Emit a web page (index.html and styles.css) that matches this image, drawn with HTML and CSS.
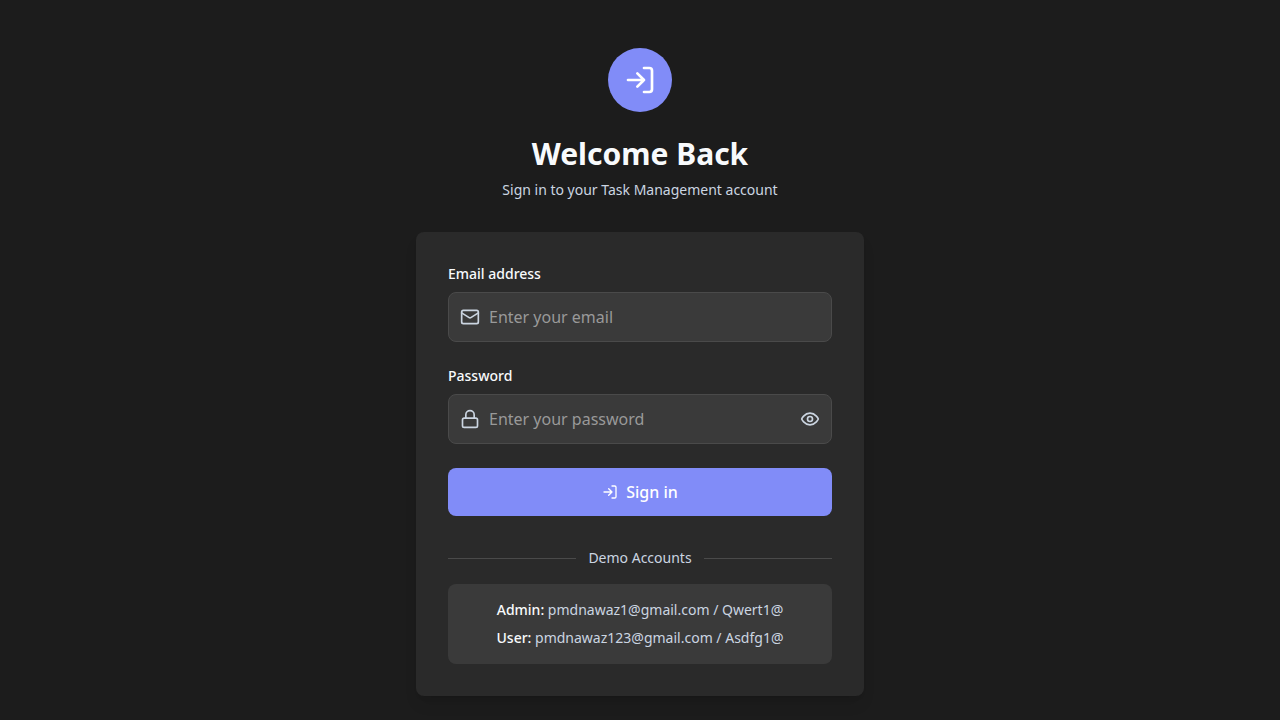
FILE: index.html
```html
<!DOCTYPE html>
<html lang="en">
<head>
<meta charset="utf-8">
<meta name="viewport" content="width=device-width, initial-scale=1">
<title>Sign in</title>
<link rel="stylesheet" href="styles.css">
</head>
<body>
<svg class="sprite" aria-hidden="true">
  <symbol id="login" viewBox="0 0 24 24"><path d="M15 3h4a2 2 0 0 1 2 2v14a2 2 0 0 1-2 2h-4M10 17l5-5-5-5M15 12H3"/></symbol>
</svg>
<main class="page">
  <header class="intro">
    <div class="badge"><svg class="icon icon-large" aria-hidden="true"><use href="#login"/></svg></div>
    <h1 class="title">Welcome Back</h1>
    <p class="subtitle">Sign in to your Task Management account</p>
  </header>
  <section class="card">
    <form class="form">
      <div class="group">
        <label class="label" for="email">Email address</label>
        <div class="field">
          <svg class="icon" viewBox="0 0 24 24" aria-hidden="true"><rect x="2" y="4" width="20" height="16" rx="2"/><path d="m22 7-8.97 5.7a1.94 1.94 0 0 1-2.06 0L2 7"/></svg>
          <input class="input" id="email" type="email" placeholder="Enter your email">
        </div>
      </div>
      <div class="group">
        <label class="label" for="password">Password</label>
        <div class="field">
          <svg class="icon" viewBox="0 0 24 24" aria-hidden="true"><rect x="3" y="11" width="18" height="11" rx="2"/><path d="M7 11V7a5 5 0 0 1 10 0v4"/></svg>
          <input class="input" id="password" type="password" placeholder="Enter your password">
          <button class="reveal" type="button" aria-label="Show password"><svg class="icon" viewBox="0 0 24 24" aria-hidden="true"><path d="M2 12s3-7 10-7 10 7 10 7-3 7-10 7-10-7-10-7Z"/><circle cx="12" cy="12" r="3"/></svg></button>
        </div>
      </div>
      <button class="submit" type="submit"><svg class="icon icon-small" aria-hidden="true"><use href="#login"/></svg>Sign in</button>
    </form>
    <div class="divider">Demo Accounts</div>
    <div class="accounts">
      <p><strong>Admin:</strong> pmdnawaz1@gmail.com / Qwert1@</p>
      <p><strong>User:</strong> pmdnawaz123@gmail.com / Asdfg1@</p>
    </div>
  </section>
</main>
</body>
</html>
```
FILE: styles.css
```css
* { box-sizing: border-box; }

body {
  margin: 0;
  background: #1c1c1c;
  color: #f8fafc;
  font-family: "Noto Sans", sans-serif;
  font-size: 14px;
  line-height: 20px;
}

h1, p { margin: 0; }

.sprite { display: none; }

.page {
  max-width: 480px;
  margin: 0 auto;
  padding: 48px 16px 24px;
}

.intro {
  display: flex;
  flex-direction: column;
  align-items: center;
  text-align: center;
  margin-bottom: 32px;
}

.badge {
  display: flex;
  align-items: center;
  justify-content: center;
  width: 64px;
  height: 64px;
  margin-bottom: 24px;
  border-radius: 50%;
  background: #818cf8;
  color: #fff;
}

.icon {
  flex: none;
  display: block;
  width: 20px;
  height: 20px;
  fill: none;
  stroke: currentColor;
  stroke-width: 2;
  stroke-linecap: round;
  stroke-linejoin: round;
}

.icon-large { width: 32px; height: 32px; }
.icon-small { width: 16px; height: 16px; }

.title {
  margin-bottom: 8px;
  font-size: 30px;
  font-weight: 700;
  line-height: 36px;
}

.subtitle { color: #cbd5e1; }

.card {
  padding: 32px;
  border-radius: 8px;
  background: #2a2a2a;
  box-shadow: 0 10px 15px -3px rgba(0, 0, 0, 0.1), 0 4px 6px -4px rgba(0, 0, 0, 0.1);
}

.form {
  display: flex;
  flex-direction: column;
  gap: 24px;
}

.label {
  display: block;
  margin-bottom: 8px;
  font-weight: 500;
}

.field {
  display: flex;
  align-items: center;
  gap: 9px;
  padding: 0 11px;
  border: 1px solid #4a4a4a;
  border-radius: 8px;
  background: #3a3a3a;
  color: #cbd5e1;
}

.input {
  flex: 1;
  min-width: 0;
  padding: 12px 0;
  border: 0;
  outline: 0;
  background: transparent;
  color: #f8fafc;
  font: inherit;
  font-size: 16px;
  line-height: 24px;
  height: 48px;
}

.input::placeholder { color: #999; }

.reveal {
  padding: 0;
  border: 0;
  background: transparent;
  color: inherit;
  cursor: pointer;
}

.submit {
  display: flex;
  align-items: center;
  justify-content: center;
  gap: 8px;
  padding: 12px 16px;
  border: 0;
  border-radius: 8px;
  background: #818cf8;
  color: #fff;
  font: inherit;
  font-size: 16px;
  font-weight: 500;
  line-height: 24px;
  cursor: pointer;
}

.divider {
  display: flex;
  align-items: center;
  gap: 12px;
  margin: 32px 0 16px;
  color: #cbd5e1;
}

.divider::before,
.divider::after {
  content: "";
  flex: 1;
  border-top: 1px solid #4a4a4a;
}

.accounts {
  display: flex;
  flex-direction: column;
  gap: 8px;
  padding: 16px;
  border-radius: 8px;
  background: #3a3a3a;
  color: #cbd5e1;
  text-align: center;
}

.accounts strong {
  color: #f8fafc;
  font-weight: 500;
}
```
